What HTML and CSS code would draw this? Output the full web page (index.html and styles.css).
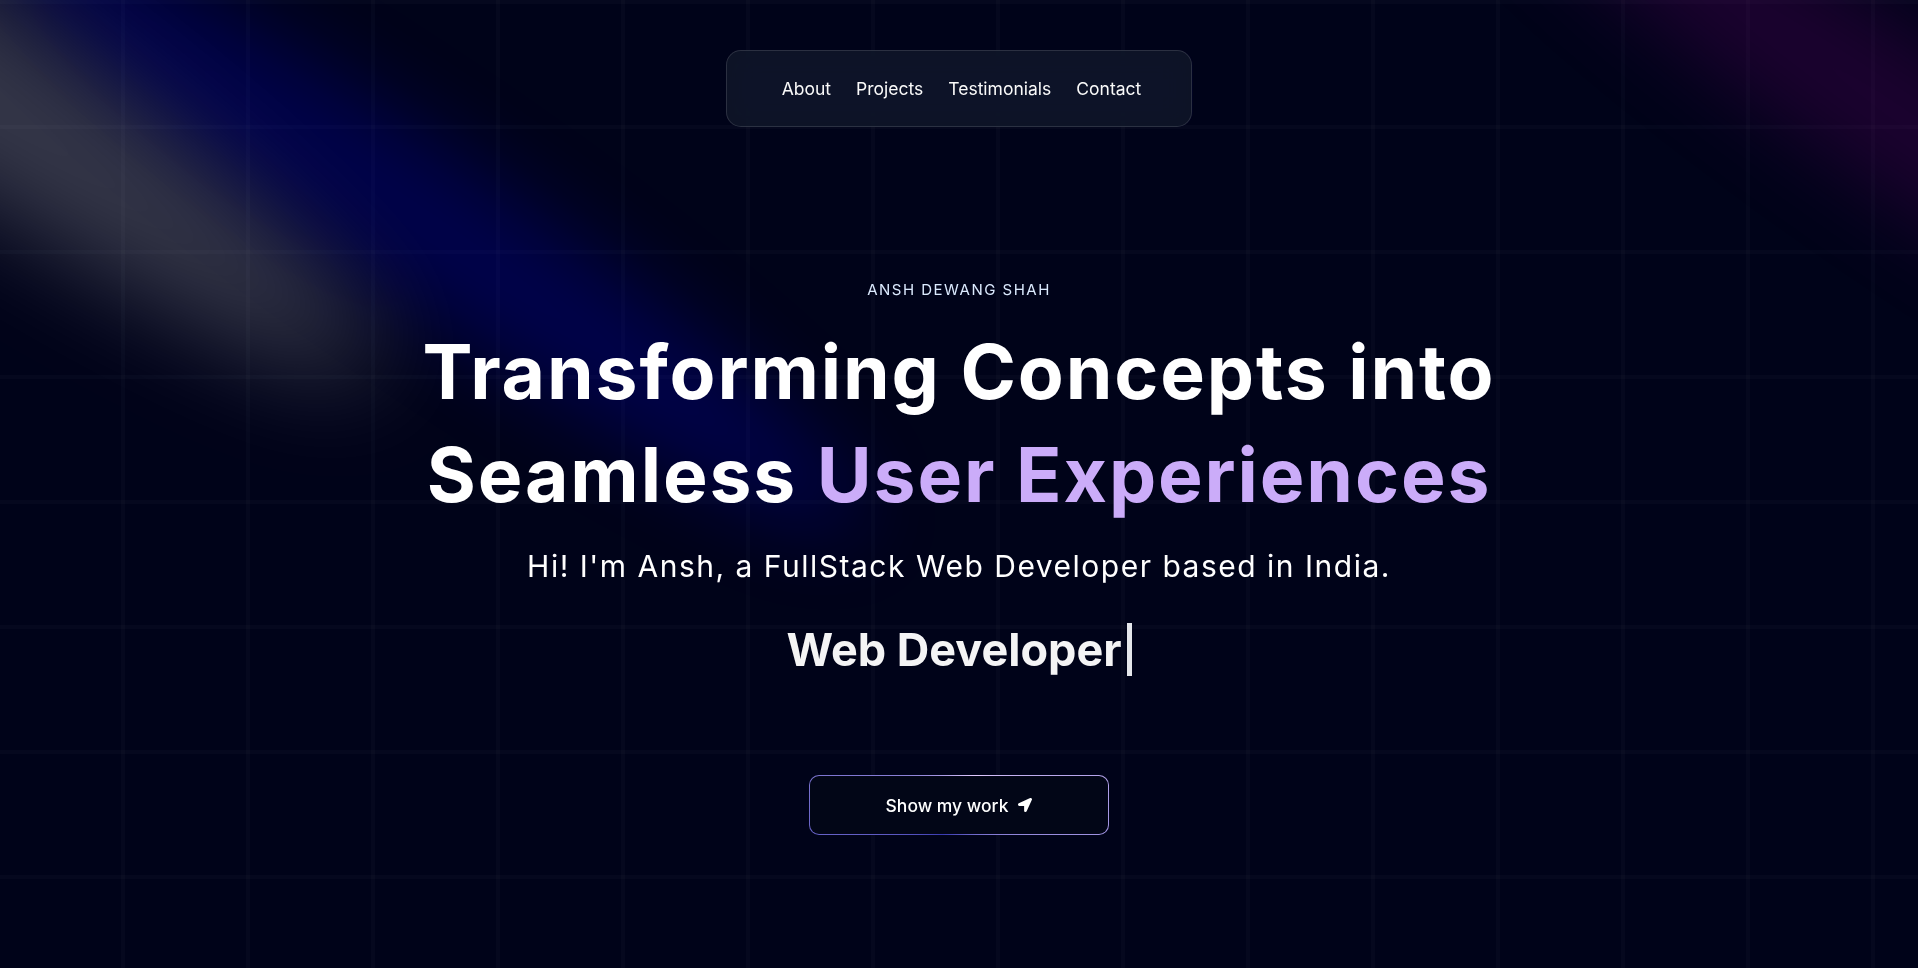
FILE: index.html
```html
<!DOCTYPE html>
<html lang="en">
<head>
<meta charset="utf-8">
<title>Ansh Dewang Shah — Portfolio</title>
<link rel="stylesheet" href="styles.css">
</head>
<body>
<div class="page">
  <div class="grid-bg"></div>

  <svg class="spot spot-white" viewBox="0 0 3787 2842" fill="none" aria-hidden="true">
    <g filter="url(#blur-white)">
      <ellipse cx="1924.71" cy="273.501" rx="1924.71" ry="273.501" transform="matrix(-0.822377 -0.568943 -0.568943 0.822377 3631.88 2291.09)" fill="white" fill-opacity="0.21"></ellipse>
    </g>
    <defs>
      <filter id="blur-white" x="0.860352" y="0.838989" width="3785.16" height="2840.26" filterUnits="userSpaceOnUse" color-interpolation-filters="sRGB">
        <feFlood flood-opacity="0" result="bg"></feFlood>
        <feBlend mode="normal" in="SourceGraphic" in2="bg" result="shape"></feBlend>
        <feGaussianBlur stdDeviation="151"></feGaussianBlur>
      </filter>
    </defs>
  </svg>

  <svg class="spot spot-purple" viewBox="0 0 3787 2842" fill="none" aria-hidden="true">
    <g filter="url(#blur-purple)">
      <ellipse cx="1924.71" cy="273.501" rx="1924.71" ry="273.501" transform="matrix(-0.822377 -0.568943 -0.568943 0.822377 3631.88 2291.09)" fill="purple" fill-opacity="0.21"></ellipse>
    </g>
    <defs>
      <filter id="blur-purple" x="0.860352" y="0.838989" width="3785.16" height="2840.26" filterUnits="userSpaceOnUse" color-interpolation-filters="sRGB">
        <feFlood flood-opacity="0" result="bg"></feFlood>
        <feBlend mode="normal" in="SourceGraphic" in2="bg" result="shape"></feBlend>
        <feGaussianBlur stdDeviation="151"></feGaussianBlur>
      </filter>
    </defs>
  </svg>

  <svg class="spot spot-blue" viewBox="0 0 3787 2842" fill="none" aria-hidden="true">
    <g filter="url(#blur-blue)">
      <ellipse cx="1924.71" cy="273.501" rx="1924.71" ry="273.501" transform="matrix(-0.822377 -0.568943 -0.568943 0.822377 3631.88 2291.09)" fill="blue" fill-opacity="0.21"></ellipse>
    </g>
    <defs>
      <filter id="blur-blue" x="0.860352" y="0.838989" width="3785.16" height="2840.26" filterUnits="userSpaceOnUse" color-interpolation-filters="sRGB">
        <feFlood flood-opacity="0" result="bg"></feFlood>
        <feBlend mode="normal" in="SourceGraphic" in2="bg" result="shape"></feBlend>
        <feGaussianBlur stdDeviation="151"></feGaussianBlur>
      </filter>
    </defs>
  </svg>

  <header class="nav-wrap">
    <nav class="nav">
      <a class="nav-link" href="#about">About</a>
      <a class="nav-link" href="#projects">Projects</a>
      <a class="nav-link" href="#testimonials">Testimonials</a>
      <a class="nav-link" href="#contact">Contact</a>
    </nav>
  </header>

  <main class="hero">
    <p class="eyebrow">Ansh Dewang Shah</p>
    <h1 class="headline">Transforming Concepts into Seamless <span class="accent">User Experiences</span></h1>
    <p class="intro">Hi! I'm Ansh, a FullStack Web Developer based in India.</p>
    <div class="typewriter"><span class="typed">Web Developer</span><span class="caret"></span></div>
    <a class="magic-btn" href="#about">
      <span class="magic-inner">
        Show my work
        <svg class="btn-icon" viewBox="0 0 512 512" aria-hidden="true"><path fill="currentColor" d="M444.52 3.52L28.74 195.42c-47.970 22.39-31.98 92.75 19.19 92.75h175.91v175.91c0 51.17 70.36 67.17 92.75 19.190l191.9-415.78c15.99-38.39-25.59-79.97-63.97-63.97z"/></svg>
      </span>
    </a>
  </main>
</div>
</body>
</html>
```
FILE: styles.css
```css
* {
  box-sizing: border-box;
}

html,
body {
  margin: 0;
  padding: 0;
}

body {
  background: #000319;
  color: #ffffff;
  font-family: Inter, "Noto Sans", "Liberation Sans", sans-serif;
  overflow: hidden;
}

.page {
  position: relative;
  width: 100%;
  height: 968px;
  overflow: hidden;
  background-color: #000319;
}

.grid-bg {
  position: absolute;
  inset: 0;
  background-image:
    linear-gradient(to bottom, rgba(255, 255, 255, 0.02) 0, rgba(255, 255, 255, 0.02) 4px, transparent 4px),
    linear-gradient(to right, transparent 121px, rgba(255, 255, 255, 0.02) 121px, rgba(255, 255, 255, 0.02) 125px);
  background-size: 125px 125px;
}

/* spotlights (decorative overlays) */
.spot {
  position: absolute;
  pointer-events: none;
  z-index: 1;
}

.spot-white {
  left: -966px;
  top: -487px;
  width: 1611px;
  height: 968px;
}

.spot-purple {
  left: 1112px;
  top: -260px;
  width: 1611px;
  height: 774px;
}

.spot-blue {
  left: -376px;
  top: -160px;
  width: 1611px;
  height: 774px;
}

/* navigation */
.nav-wrap {
  position: relative;
  z-index: 5;
  display: flex;
  justify-content: center;
  padding-top: 50px;
}

.nav {
  display: flex;
  align-items: center;
  gap: 20px;
  padding: 25px 50px;
  border: 1px solid rgba(255, 255, 255, 0.125);
  border-radius: 15px;
  background-color: rgba(17, 25, 40, 0.75);
  backdrop-filter: blur(16px) saturate(180%);
}

.nav-link {
  margin-left: 5px;
  color: #fafafa;
  font-size: 17.5px;
  line-height: 25px;
  text-decoration: none;
}

/* hero */
.hero {
  position: relative;
  z-index: 3;
  display: flex;
  flex-direction: column;
  align-items: center;
  margin-top: 153px;
}

.eyebrow {
  margin: 0;
  max-width: 400px;
  color: #dbeafe;
  font-size: 15px;
  line-height: 20px;
  letter-spacing: 0.1em;
  text-transform: uppercase;
  text-align: center;
}

.headline {
  max-width: 1151px;
  margin: 20px 0;
  color: #ffffff;
  font-size: 75px;
  font-weight: 700;
  line-height: 103px;
  letter-spacing: 0.025em;
  text-align: center;
}

.accent {
  color: #cbacf9;
}

.intro {
  margin: 0;
  color: #ffffff;
  font-size: 30px;
  line-height: 40px;
  letter-spacing: 0.05em;
  text-align: center;
}

.typewriter {
  display: flex;
  align-items: center;
  margin-top: 37px;
  height: 53px;
}

.typed {
  color: #f4f4f5;
  font-size: 45px;
  font-weight: 700;
  line-height: 50px;
}

.caret {
  display: block;
  width: 5px;
  height: 53px;
  margin-left: 5px;
  background: #e5e7eb;
}

.magic-btn {
  position: relative;
  display: flex;
  width: 300px;
  height: 60px;
  margin-top: 99px;
  padding: 1.25px;
  border-radius: 10px;
  overflow: hidden;
  text-decoration: none;
  background: conic-gradient(from 30deg at 50% 50%, #e2cbff 0%, #393bb2 50%, #e2cbff 100%);
}

.magic-inner {
  display: flex;
  flex: 1;
  align-items: center;
  justify-content: center;
  gap: 10px;
  border-radius: 9px;
  background: #020617;
  color: #ffffff;
  font-size: 17.5px;
  font-weight: 500;
}

.btn-icon {
  width: 14px;
  height: 14px;
}
```
